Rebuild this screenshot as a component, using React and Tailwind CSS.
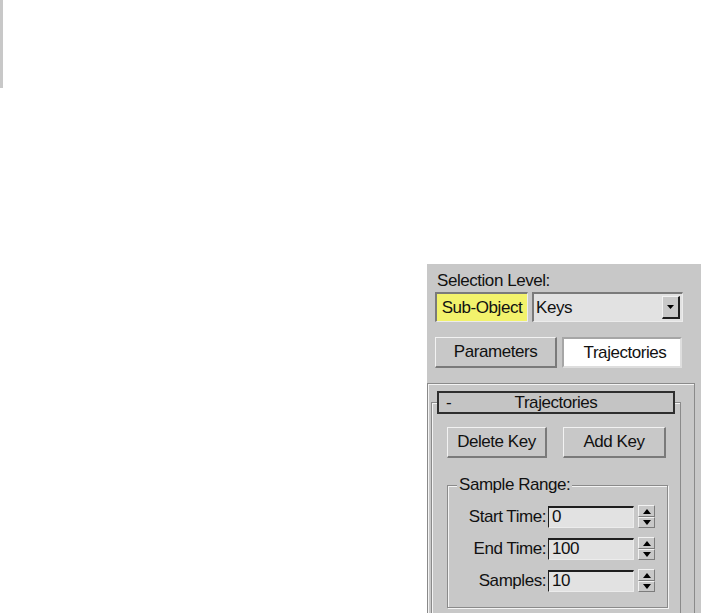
import React from "react";

function Spinner() {
  return (
    <div className="ml-[4px] flex h-[23px] w-[17px] flex-col">
      <div className="flex h-[12px] items-center justify-center border-t border-l border-[#f2f2f2] border-r border-b border-r-[#7c7c7c] border-b-[#7c7c7c] bg-[#c8c8c8]">
        <svg width="8" height="5" viewBox="0 0 8 5"><path d="M4 0 L8 5 L0 5 Z" fill="#000" /></svg>
      </div>
      <div className="flex h-[11px] items-center justify-center border-t border-l border-[#f2f2f2] border-r border-b border-r-[#7c7c7c] border-b-[#7c7c7c] bg-[#c8c8c8]">
        <svg width="8" height="5" viewBox="0 0 8 5"><path d="M0 0 L8 0 L4 5 Z" fill="#000" /></svg>
      </div>
    </div>
  );
}

function Row({ label, value }) {
  return (
    <div className="flex h-[23px] items-center">
      <div className="w-[98px] text-right">{label}</div>
      <div className="ml-[2px] flex h-[22px] w-[86px] items-center border-t-2 border-l border-[#1e1e1e] border-r border-b border-r-[#ececec] border-b-[#ececec] bg-[#e2e2e2] pl-[3px]">
        {value}
      </div>
      <Spinner />
    </div>
  );
}

const raised =
  "border-t border-l border-[#f2f2f2] border-r-2 border-b-2 border-r-[#7a7a7a] border-b-[#7a7a7a] bg-[#c8c8c8]";

export default function App() {
  return (
    <div className="relative h-[613px] w-[701px] overflow-hidden bg-white font-['Liberation_Sans',Arial,sans-serif] text-[17px] leading-[18px] tracking-[-0.45px] text-[#111]">
      <div className="h-[88px] w-[3px] bg-[#c8c8c8]" />
      <div className="ml-[427px] mt-[176px] h-[349px] w-[274px] overflow-hidden bg-[#c8c8c8]">
        <div className="pl-[8px] pt-[8px]">
          <div className="pl-[2px]">Selection Level:</div>
          <div className="mt-[2px] flex h-[30px] gap-[4px]">
            <div className="flex w-[93px] items-center justify-center border-t-2 border-l-2 border-[#7a7a7a] border-r border-b border-r-[#ececec] border-b-[#ececec] bg-[#f2f26c]">
              Sub-Object
            </div>
            <div className="flex w-[151px] items-center border-t-2 border-l-2 border-[#7a7a7a] border-r border-b border-r-[#ececec] border-b-[#ececec] bg-[#e2e2e2] pl-[2px]">
              <span className="flex-1">Keys</span>
              <div className="mr-[2px] flex h-[23px] w-[18px] items-center justify-center border-t border-l border-[#f2f2f2] border-r-2 border-b-2 border-r-[#1e1e1e] border-b-[#1e1e1e] bg-[#c8c8c8]">
                <svg width="7" height="4" viewBox="0 0 7 4"><path d="M0 0 L7 0 L3.5 4 Z" fill="#000" /></svg>
              </div>
            </div>
          </div>
          <div className="mt-[15px] flex h-[31px] gap-[5px]">
            <div className={`flex w-[122px] items-center justify-center ${raised}`}>Parameters</div>
            <div className="flex w-[120px] items-center justify-center border-t-2 border-l-2 border-[#a6a6a6] border-r-2 border-b-2 border-r-[#dedede] border-b-[#dedede] bg-white pl-[6px]">
              Trajectories
            </div>
          </div>
        </div>

        <div className="mt-[15px] h-[300px] w-[268px] border-t border-l border-r border-[#8a8a8a] shadow-[inset_1px_1px_0_#f4f4f4]">
          <div className="ml-[3px] mt-[18px] h-[300px] w-[250px] border-t border-l border-r border-[#8a8a8a] shadow-[inset_1px_1px_0_#f4f4f4]">
            <div className="-mt-[12px] ml-[5px] flex h-[23px] w-[238px] items-center border-2 border-[#2e2e2e] bg-[#c4c4c4]">
              <span className="w-[22px] pl-[7px]">-</span>
              <span className="flex-1 text-center">Trajectories</span>
              <span className="w-[22px]" />
            </div>
            <div className="ml-[15px] mt-[13px] flex h-[31px] gap-[16px]">
              <div className={`flex w-[100px] items-center justify-center ${raised}`}>Delete Key</div>
              <div className={`flex w-[103px] items-center justify-center ${raised}`}>Add Key</div>
            </div>
            <div className="ml-[15px] mt-[27px] h-[123px] w-[221px] border border-[#8a8a8a] shadow-[inset_1px_1px_0_#f4f4f4,1px_1px_0_#f4f4f4]">
              <div className="-mt-[10px] ml-[9px] w-fit bg-[#c8c8c8] px-[2px]">Sample Range:</div>
              <div className="mt-[11px] flex flex-col gap-[9px]">
                <Row label="Start Time:" value="0" />
                <Row label="End Time:" value="100" />
                <Row label="Samples:" value="10" />
              </div>
            </div>
          </div>
        </div>
      </div>
    </div>
  );
}
